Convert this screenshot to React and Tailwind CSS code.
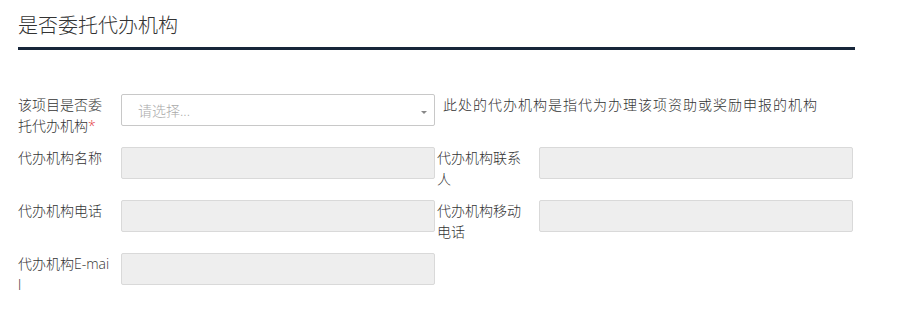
export default function App() {
  const font = { fontFamily: '"Open Sans","Noto Sans CJK SC",sans-serif' };
  const Label = ({ children, right }) => (
    <div
      className={
        right
          ? "w-[102px] shrink-0 pr-[8px] text-[14px] leading-[21px] text-[#333] break-all"
          : "w-[103px] shrink-0 pr-[9px] text-[14px] leading-[21px] text-[#333] break-all"
      }
    >
      {children}
    </div>
  );
  const Input = () => (
    <div className="w-[314px] h-[32px] shrink-0 bg-[#eeeeee] border border-[#d9d9d9] rounded-[2px]" />
  );
  return (
    <div className="w-[900px] h-[323px] bg-white text-[#333] font-light" style={font}>
      <div className="ml-[18px] w-[837px] pt-[12px] pb-[7px] border-b-[3px] border-[#17263a]">
        <div className="text-[20px] leading-[28px] text-[#333]">是否委托代办机构</div>
      </div>
      <div className="ml-[18px] mt-[44px]">
        <div className="flex items-start mb-[11px]">
          <Label>
            该项目是否委托代办机构<span className="text-[#e4393c]">*</span>
          </Label>
          <div className="relative w-[314px] h-[32px] shrink-0 bg-white border border-[#c8c8c8] rounded-[2px] flex items-center pl-[16px]">
            <span className="text-[14px] text-[#aaa]">请选择...</span>
            <svg className="absolute right-[7px] top-[16px]" width="6" height="3" viewBox="0 0 6 3">
              <path d="M0 0 L6 0 L3 3 Z" fill="#888" />
            </svg>
          </div>
          <div className="ml-[8px] text-[14px] leading-[21px] tracking-[1px] text-[#333]">
            此处的代办机构是指代为办理该项资助或奖励申报的机构
          </div>
        </div>
        <div className="flex items-start mb-[11px]">
          <div className="flex w-[419px] shrink-0">
            <Label>代办机构名称</Label>
            <Input />
          </div>
          <div className="flex">
            <Label right>代办机构联系人</Label>
            <Input />
          </div>
        </div>
        <div className="flex items-start mb-[11px]">
          <div className="flex w-[419px] shrink-0">
            <Label>代办机构电话</Label>
            <Input />
          </div>
          <div className="flex">
            <Label right>代办机构移动电话</Label>
            <Input />
          </div>
        </div>
        <div className="flex items-start">
          <div className="flex w-[419px] shrink-0">
            <Label>代办机构E-mail</Label>
            <Input />
          </div>
        </div>
      </div>
    </div>
  );
}
